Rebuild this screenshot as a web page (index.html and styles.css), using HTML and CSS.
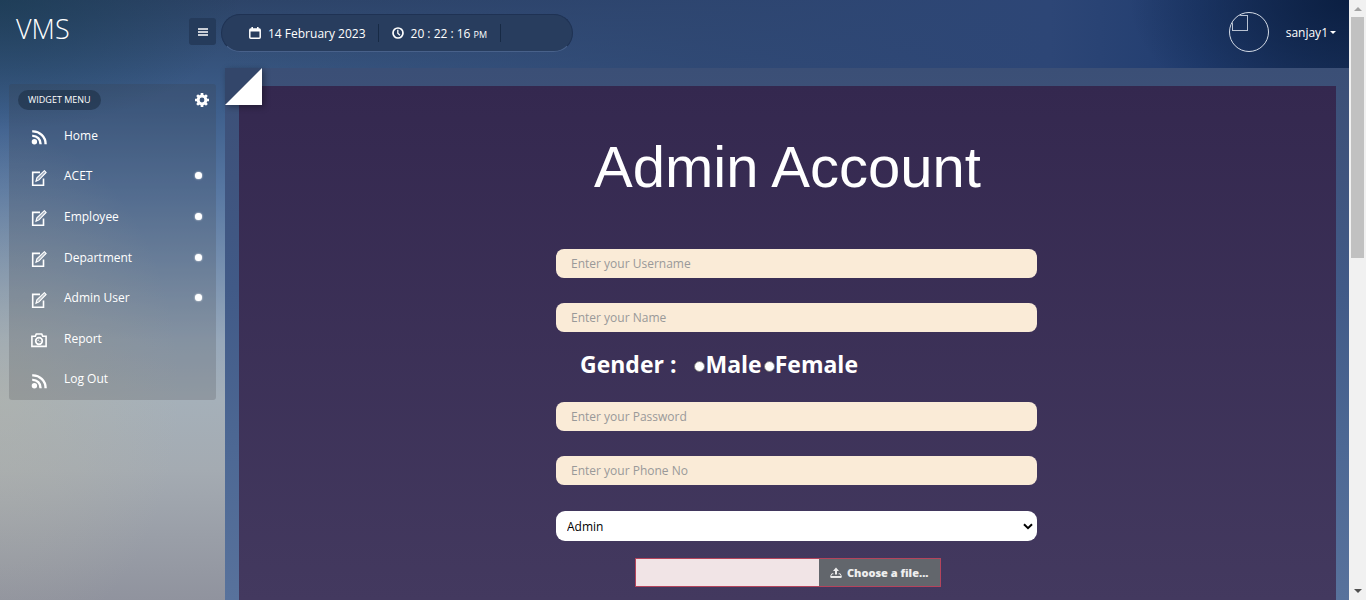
FILE: index.html
```html
<!DOCTYPE html>
<html lang="en">
<head>
<meta charset="utf-8">
<meta name="viewport" content="width=device-width, initial-scale=1">
<title>VMS - Admin Account</title>
<link rel="stylesheet" href="styles.css">
</head>
<body>
<svg class="sprite" aria-hidden="true">
  <symbol id="i-feed" viewBox="0 0 16 16"><circle cx="3.4" cy="12.8" r="2.7" fill="currentColor"/><path d="M1.2 6.9A7.9 7.9 0 0 1 9.6 15.2M1.2 2.4A12.6 12.6 0 0 1 14.6 15.2" fill="none" stroke="currentColor" stroke-width="2.4"/></symbol>
  <symbol id="i-edit" viewBox="0 0 16 16"><path d="M9 2.4H1.7v12.8h10.8V8.6" fill="none" stroke="currentColor" stroke-width="1.6"/><path d="M5 11.2l.9-3.4L13.4.7l1.7 1.7L8 9.9z" fill="currentColor" fill-opacity=".45" stroke="currentColor" stroke-width="1.1"/></symbol>
  <symbol id="i-camera" viewBox="0 0 16 16"><path d="M.9 4.2h3.4L5.3 2h5.4l1 2.2h3.4v10.2H.9z" fill="none" stroke="currentColor" stroke-width="1.6"/><circle cx="8" cy="9" r="3.3" fill="none" stroke="currentColor" stroke-width="1.7"/><path d="M6.9 9A1.1 1.1 0 0 1 8 7.9M8.6 10a1.1 1.1 0 0 0 .4-1" fill="none" stroke="currentColor" stroke-width="1"/></symbol>
</svg>
<div class="window">
  <div class="app">
    <header class="topbar">
      <div class="brand">
        <h1 class="logo">VMS</h1>
        <button class="toggle" type="button" aria-label="Toggle menu"><svg width="10" height="8" viewBox="0 0 10 8"><path d="M0 1h10M0 4h10M0 7h10" stroke="currentColor" stroke-width="1.4"/></svg></button>
      </div>
      <div class="clock">
        <div class="clock-part">
          <svg width="12" height="12" viewBox="0 0 12 12"><rect x=".8" y="2" width="10.4" height="9.2" rx="1" fill="none" stroke="currentColor" stroke-width="1.5"/><path d="M1 3.3h10" stroke="currentColor" stroke-width="2.4"/><path d="M3.2 0v2M8.8 0v2" stroke="currentColor" stroke-width="1.6"/></svg>
          <span>14 February 2023</span>
        </div>
        <div class="clock-part time">
          <svg width="12" height="12" viewBox="0 0 12 12"><circle cx="6" cy="6" r="5" fill="none" stroke="currentColor" stroke-width="1.7"/><path d="M5.8 2.8v3.4L8 8.2" fill="none" stroke="currentColor" stroke-width="1.3"/></svg>
          <span>20 : 22 : 16 <small>PM</small></span>
        </div>
      </div>
      <div class="account">
        <span class="avatar"></span>
        <a class="user" href="#">sanjay1<span class="caret"></span></a>
      </div>
    </header>
    <div class="layout">
      <nav class="sidebar">
        <div class="menu">
          <div class="menu-head">
            <span class="menu-title">WIDGET MENU</span>
            <button class="gear" type="button" aria-label="Settings"><svg width="14" height="14" viewBox="0 0 14 14"><circle cx="7" cy="7" r="3.9" fill="none" stroke="currentColor" stroke-width="3"/><g stroke="currentColor" stroke-width="2.7"><path d="M7 0v2.6M7 11.4V14M0 7h2.6M11.4 7H14"/><path d="M2.1 2.1l1.8 1.8M10.1 10.1l1.8 1.8M2.1 11.9l1.8-1.8M10.1 3.9l1.8-1.8"/></g></svg></button>
          </div>
          <ul class="items">
            <li><a href="#"><svg class="icon"><use href="#i-feed"/></svg>Home</a></li>
            <li><a class="more" href="#"><svg class="icon"><use href="#i-edit"/></svg>ACET</a></li>
            <li><a class="more" href="#"><svg class="icon"><use href="#i-edit"/></svg>Employee</a></li>
            <li><a class="more" href="#"><svg class="icon"><use href="#i-edit"/></svg>Department</a></li>
            <li><a class="more" href="#"><svg class="icon"><use href="#i-edit"/></svg>Admin User</a></li>
            <li><a href="#"><svg class="icon"><use href="#i-camera"/></svg>Report</a></li>
            <li><a href="#"><svg class="icon"><use href="#i-feed"/></svg>Log Out</a></li>
          </ul>
        </div>
      </nav>
      <main class="content">
        <svg class="corner" width="37" height="37" viewBox="0 0 37 37" aria-hidden="true"><path d="M0 0h37L0 37z" fill="#33466a"/><path d="M37 0v37H0z" fill="#fff"/></svg>
        <form class="panel">
          <h2 class="title">Admin Account</h2>
          <div class="fields">
            <input class="field" type="text" placeholder="Enter your Username" aria-label="Username">
            <input class="field" type="text" placeholder="Enter your Name" aria-label="Name">
            <div class="gender" role="radiogroup" aria-labelledby="gender-label">
              <span id="gender-label">Gender :</span>
              <div class="options">
                <label><input type="radio" name="gender">Male</label>
                <label><input type="radio" name="gender">Female</label>
              </div>
            </div>
            <input class="field" type="password" placeholder="Enter your Password" aria-label="Password">
            <input class="field" type="tel" placeholder="Enter your Phone No" aria-label="Phone number">
            <div class="select-wrap">
              <select class="select" aria-label="Role"><option>Admin</option></select>
              <svg class="chevron" width="10" height="7" viewBox="0 0 10 7" aria-hidden="true"><path d="M1 1.2l4 4 4-4" fill="none" stroke="#000" stroke-width="2"/></svg>
            </div>
          </div>
          <div class="upload">
            <input class="upload-name" type="text" aria-label="Selected file" readonly>
            <button class="upload-btn" type="button"><svg width="12" height="12" viewBox="0 0 12 12"><path d="M6 0.6l3 3.4H7v3.6H5V4H3z" fill="currentColor"/><path d="M3.4 6.8H1.8L.8 8.8v1.6h10.4V8.8l-1-2H8.6" fill="none" stroke="currentColor" stroke-width="1"/><path d="M.8 9h10.4v1.6H.8z" fill="currentColor"/></svg>Choose a file...</button>
          </div>
        </form>
      </main>
    </div>
  </div>
  <div class="scroll" aria-hidden="true">
    <span class="arrow up"></span>
    <span class="thumb"></span>
    <span class="arrow down"></span>
  </div>
</div>
</body>
</html>
```
FILE: styles.css
```css
* { box-sizing: border-box; }

body {
  margin: 0;
  font-family: "Open Sans", sans-serif;
  font-size: 12px;
  color: #fff;
}

button, input, select { font: inherit; color: inherit; margin: 0; }
a { color: inherit; text-decoration: none; }
button { border: 0; padding: 0; }

.sprite { position: absolute; width: 0; height: 0; }

.window { display: flex; min-height: 100vh; }

.app {
  flex: 1;
  min-width: 0;
  display: flex;
  flex-direction: column;
  background:
    radial-gradient(ellipse 240px 130px at 0 0, rgba(22, 58, 78, .6), rgba(22, 58, 78, 0)),
    radial-gradient(ellipse 180px 260px at 0 390px, rgba(182, 180, 165, .45), rgba(182, 180, 165, 0)),
    linear-gradient(to bottom, #2d4468 0, #37557f 70px, #3e5f8c 110px, #5777a2 190px, #7891b0 270px, #97a8ba 340px, #a5b0b9 400px, #a4abb2 470px, #90939e 600px);
}

/* top bar */
.topbar {
  display: flex;
  height: 68px;
  background:
    radial-gradient(ellipse 220px 130px at 100% 0, #0b1f42, rgba(11, 31, 66, 0)),
    linear-gradient(to right, rgba(47, 73, 118, 0) 0, rgba(47, 73, 118, 0) 220px, rgba(46, 70, 114, .8) 700px, #2d4676 1050px, #213d70 1200px, #1c3460 100%);
}

.brand {
  display: flex;
  justify-content: space-between;
  width: 225px;
  padding: 10px 9px 0 16px;
}

.logo { margin: 0; font-size: 27px; font-weight: 300; line-height: 38px; }

.toggle {
  display: flex;
  align-items: center;
  justify-content: center;
  width: 27px;
  height: 27px;
  margin-top: 8px;
  border-radius: 3px;
  background: #253b5b;
}

.clock {
  display: flex;
  align-items: center;
  align-self: flex-start;
  width: 352px;
  height: 38px;
  margin: 14px 0 0 -4px;
  padding-left: 27px;
  border: 1px solid #1f3253;
  border-bottom-color: #48618a;
  border-radius: 19px;
  background: #283d5e;
  font-weight: 500;
}

.clock-part {
  display: flex;
  align-items: center;
  gap: 7px;
  height: 18px;
  padding-right: 12px;
  border-right: 1px solid #172a45;
  white-space: nowrap;
}

.time { padding: 0 13px; }
.time small { font-size: 9px; }

.account {
  display: flex;
  align-items: center;
  gap: 17px;
  margin-left: auto;
  padding: 0 13px 4px 0;
}

.avatar {
  width: 40px;
  height: 40px;
  overflow: hidden;
  border: 1px solid #d4dbe6;
  border-radius: 50%;
}

.avatar::before {
  content: "";
  display: block;
  width: 14px;
  height: 14px;
  margin: 2px;
  border: 1px solid #b8c2d2;
}

.user { display: flex; align-items: center; gap: 2px; font-weight: 500; }
.caret { border: 3px solid transparent; border-top-color: #fff; border-bottom: 0; }

/* sidebar */
.layout { flex: 1; display: flex; }
.sidebar { flex: 0 0 225px; padding: 16px 9px; }
.menu { border-radius: 3px; background: rgba(60, 60, 65, .2); }

.menu-head {
  display: flex;
  align-items: center;
  justify-content: space-between;
  height: 31px;
  padding: 0 7px 0 9px;
}

.menu-title {
  padding: 0 10px;
  border-radius: 10px;
  background: rgba(28, 46, 68, .6);
  font-size: 9px;
  font-weight: 500;
  line-height: 20px;
}

.gear { display: flex; background: none; }

.items {
  display: flex;
  flex-direction: column;
  min-height: 285px;
  margin: 0;
  padding: 0 0 1px;
  list-style: none;
  font-weight: 500;
}

.items li { flex: 1; display: flex; }

.items a {
  flex: 1;
  display: flex;
  align-items: center;
  gap: 17px;
  padding: 0 14px 0 22px;
}

.icon { width: 16px; height: 16px; margin-top: 4px; }

.more::after {
  content: "";
  width: 7px;
  height: 7px;
  margin-left: auto;
  border-radius: 50%;
  background: #fff;
  box-shadow: 0 0 2px #fff;
}

/* content */
.content {
  position: relative;
  flex: 1;
  min-width: 0;
  display: flex;
  padding: 18px 13px 0 14px;
  background: linear-gradient(to bottom, #3b4f76 0, #3f547e 110px, #415a87 220px, #4d6894 380px, #58729c 532px);
}

.corner {
  position: absolute;
  top: 0;
  left: 0;
  filter: drop-shadow(2px 2px 3px rgba(0, 0, 0, .35));
}

.panel {
  flex: 1;
  display: flex;
  flex-direction: column;
  align-items: center;
  background: linear-gradient(to bottom, #34284f, #43395f);
}

.title {
  margin: 48px 0 50px;
  font-family: "Liberation Sans", Arial, sans-serif;
  font-size: 58px;
  font-weight: 400;
  line-height: 65px;
}

.fields {
  display: flex;
  flex-direction: column;
  width: 499px;
  max-width: 100%;
  padding-left: 18px;
}

.field {
  width: 100%;
  height: 29px;
  margin-bottom: 25px;
  padding: 0 15px;
  border: 0;
  border-radius: 8px;
  background: #faebd7;
  color: #444;
}

.field::placeholder { color: #999; opacity: 1; }

.gender {
  display: flex;
  gap: 18px;
  height: 33px;
  margin: -9px 0 21px;
  padding-left: 24px;
  font-size: 23px;
  font-weight: 700;
  line-height: 33px;
}

.options { display: flex; gap: 2px; }
.options label { display: flex; align-items: center; }

.options input {
  appearance: none;
  width: 11px;
  height: 11px;
  margin-top: 4px;
  border: 1px solid #767676;
  border-radius: 50%;
  background: #fff;
}

.select-wrap { position: relative; display: flex; margin-top: 1px; }

.select {
  appearance: none;
  width: 100%;
  height: 30px;
  padding: 0 11px;
  border: 0;
  border-radius: 9px;
  background: #fff;
  color: #000;
}

.chevron { position: absolute; right: 4px; top: 12px; }

.upload {
  display: flex;
  width: 306px;
  height: 29px;
  margin-top: 17px;
  border: 1px solid #b4445c;
}

.upload-name {
  flex: 1;
  min-width: 0;
  border: 0;
  background: #f1e4e6;
  color: #444;
}

.upload-btn {
  display: flex;
  align-items: center;
  gap: 5px;
  padding: 0 11px;
  background: #62666c;
  color: #eee;
  font-size: 11px;
  font-weight: 800;
}

/* scroll bar */
.scroll {
  flex: 0 0 17px;
  display: flex;
  flex-direction: column;
  align-items: center;
  padding: 7px 0;
  background: #f1f1f1;
}

.arrow { border: 4px solid transparent; }
.up { border-top: 0; border-bottom-color: #a3a3a3; }
.down { margin-top: auto; border-bottom: 0; border-top-color: #505050; }
.thumb { width: 13px; height: 241px; margin-top: 6px; background: #c1c1c1; }
```
